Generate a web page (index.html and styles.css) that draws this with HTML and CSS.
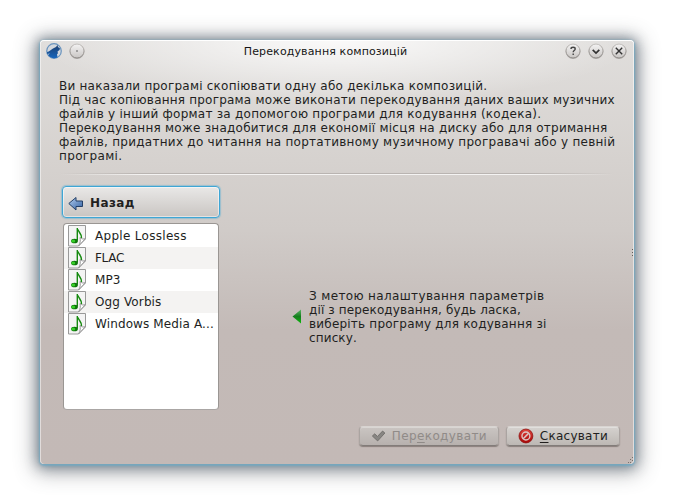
FILE: index.html
```html
<!DOCTYPE html>
<html lang="uk">
<head>
<meta charset="utf-8">
<title>Перекодування композицій</title>
<link rel="stylesheet" href="styles.css">
</head>
<body>
<svg class="defs" width="0" height="0">
  <defs>
    <linearGradient id="btn" x1="0" y1="0" x2="0" y2="1"><stop offset="0" stop-color="#f4f3f3"/><stop offset="1" stop-color="#c9c6c4"/></linearGradient>
    <linearGradient id="rim" x1="0" y1="0" x2="0" y2="1"><stop offset="0" stop-color="#c4c1be"/><stop offset="1" stop-color="#8b8784"/></linearGradient>
    <linearGradient id="blue" x1="0" y1="0" x2="1" y2="1"><stop offset="0" stop-color="#b5d0f2"/><stop offset="1" stop-color="#315fa0"/></linearGradient>
    <linearGradient id="wolf" x1="0" y1="0" x2="0" y2="1"><stop offset="0" stop-color="#1d3f70"/><stop offset="1" stop-color="#1766bd"/></linearGradient>
    <linearGradient id="green" x1="0" y1="0" x2="0" y2="1"><stop offset="0" stop-color="#59b566"/><stop offset=".5" stop-color="#167d1e"/><stop offset="1" stop-color="#08bb08"/></linearGradient>
    <linearGradient id="red" x1="0" y1="0" x2="0" y2="1"><stop offset="0" stop-color="#e0473f"/><stop offset="1" stop-color="#a80606"/></linearGradient>
    <symbol id="round" viewBox="0 0 16 16"><circle cx="8" cy="8.500" r="7.500" fill="#9b9794" opacity=".6"/><circle cx="8" cy="8" r="7" fill="url(#btn)" stroke="url(#rim)"/></symbol>
    <symbol id="note" viewBox="0 0 20 22">
      <path d="M1.500.5h17v13.500l-7 7h-10z" fill="#f4f4f4" stroke="#999"/>
      <path d="M18.500 13.500c-2 1-4 .5-5.500-1 .5 3 .5 5.500-1.500 8.500z" fill="#fff" stroke="#999"/>
      <path d="M10.300 15.500V3c.7 4 4.600 5.500 4.200 10" fill="none" stroke="#168a10" stroke-width="1.400"/>
      <ellipse cx="7.500" cy="16" rx="3.400" ry="2.300" fill="#0d730a"/><ellipse cx="6.300" cy="16" rx="2" ry="1.500" fill="#36cf28"/>
    </symbol>
  </defs>
</svg>
<main class="window">
  <header class="titlebar">
    <svg class="tb-icon" viewBox="0 0 16 16"><circle cx="8" cy="8" r="7.300" fill="#d3d8de" stroke="#6a94be" stroke-width="1.200"/><path d="M1 9c2.500-.5 4-2.500 6-3.500l3-1.500 1.500-2 .5 2 2 1.500-.5 1.500-2 1.500.5 2-1 .5.5 3.500C8 16 4 15 2 12l2-1.500L1.200 11z" fill="url(#wolf)"/></svg>
    <svg class="tb-icon sticky" viewBox="0 0 16 16"><use href="#round"/><circle cx="8" cy="8" r=".7" fill="#333"/></svg>
    <h1>Перекодування композицій</h1>
    <svg class="tb-icon" viewBox="0 0 16 16"><use href="#round"/><path d="M6 6c0-2.300 4.200-2.300 4.200 0 0 1.500-2 1.500-2 3.200M8.200 10.400v1.500" fill="none" stroke="#444" stroke-width="1.400"/></svg>
    <svg class="tb-icon" viewBox="0 0 16 16"><use href="#round"/><path d="M4.700 6.800L8 10l3.300-3.200" fill="none" stroke="#333" stroke-width="1.700"/></svg>
    <svg class="tb-icon" viewBox="0 0 16 16"><use href="#round"/><path d="M4.800 4.800l6.400 6.400M11.200 4.800l-6.400 6.400" stroke="#333" stroke-width="1.400"/></svg>
  </header>
  <p class="intro"><span class="first">Ви наказали програмі скопіювати одну або декілька композицій.</span><br><span class="snug">Під час копіювання програма може виконати перекодування даних ваших музичних</span><br>файлів у інший формат за допомогою програми для кодування (кодека).<br>Перекодування може знадобитися для економії місця на диску або для отримання<br><span class="long">файлів, придатних до читання на портативному музичному програвачі або у певній</span><br><span class="last">програмі.</span></p>
  <div class="rule"></div>
  <section class="body">
    <div class="side">
      <button class="back"><svg width="16" height="16" viewBox="0 0 16 16"><path d="M.8 8.500l7.200-6v3.500h6.500v5.500H8V15z" fill="url(#blue)" stroke="#233f66" stroke-linejoin="round"/></svg>Назад</button>
      <ul class="list">
        <li><svg><use href="#note"/></svg><span class="wide">Apple Lossless</span></li>
        <li><svg><use href="#note"/></svg><span class="flac">FLAC</span></li>
        <li><svg><use href="#note"/></svg><span>MP3</span></li>
        <li><svg><use href="#note"/></svg><span>Ogg Vorbis</span></li>
        <li><svg><use href="#note"/></svg><span>Windows Media A...</span></li>
      </ul>
    </div>
    <div class="hint">
      <svg width="10" height="16" viewBox="0 0 10 16"><path d="M.5 7.500L9 .5v14z" fill="url(#green)"/></svg>
      <p><span class="wide">З метою налаштування параметрів</span><br>дії з перекодування, будь ласка,<br><span class="snug">виберіть програму для кодування зі</span><br>списку.</p>
    </div>
  </section>
  <footer class="actions">
    <button class="action ok" disabled><svg width="16" height="16" viewBox="0 0 16 16"><path d="M1.500 8l2.500-2.300 3 2.800 5.500-5.800L15 4.800 7.200 13.300z" fill="#888683" stroke="#706e6b" stroke-linejoin="round"/></svg><span>Пер<u>е</u>кодувати</span></button>
    <button class="action cancel"><svg width="16" height="16" viewBox="0 0 16 16"><circle cx="8" cy="8" r="7" fill="url(#red)" stroke="#8d1010" stroke-width=".8"/><circle cx="8" cy="8" r="4" fill="none" stroke="#dcc9c6" stroke-width="1.400"/><path d="M5.200 10.800l5.600-5.600" stroke="#dcc9c6" stroke-width="1.600"/></svg><span><u>С</u>касувати</span></button>
  </footer>
  <i class="splitter"></i>
  <svg class="grip" width="7" height="7" viewBox="0 0 7 7"><path d="M5 0h1v1H5zM3 2h1v1H3zM5 3h1v1H5zM1 5h1v1H1zM3 5h1v1H3z" fill="#77716d"/></svg>
</main>
</body>
</html>
```
FILE: styles.css
```css
* { box-sizing: border-box; }
body {
  margin: 0;
  padding: 40px;
  width: 674px;
  height: 504px;
  overflow: hidden;
  background: #fff;
  color: #221f1e;
  font: 12px/14px "DejaVu Sans", sans-serif;
}
.defs { position: absolute; }
p, h1, ul { margin: 0; padding: 0; }
.window {
  position: relative;
  display: flex;
  flex-direction: column;
  width: 594px;
  height: 424px;
  border-radius: 4px;
  background:
    radial-gradient(ellipse 300px 64px at 50% 0, rgba(255,255,255,.85), rgba(255,255,255,0)),
    linear-gradient(#e0dedc, #d6d2cf 120px, #d0cbc8 190px, #c3bab7 290px, #c3b9b6);
  box-shadow:
    inset 0 1px #fff, inset -1px 0 rgba(255,255,255,.5), inset 1px 0 rgba(255,255,255,.5),
    0 1px 2px 1px rgba(110,170,198,.8), 0 1px 12px 2px rgba(60,80,100,.55), 0 3px 20px 6px rgba(80,85,88,.45);
}
.titlebar {
  display: flex;
  align-items: center;
  height: 22px;
  padding: 0 7px 0 6px;
  gap: 7px;
}
.tb-icon { width: 16px; height: 16px; flex: none; }
h1 {
  flex: 1;
  padding: 1px 0 0 1px;
  font-size: 11px;
  line-height: 14px;
  font-weight: 400;
  letter-spacing: .13px;
  text-align: center;
  white-space: nowrap;
  color: #151515;
}
.intro {
  height: 94px;
  margin: 17px 0 0 19px;
  letter-spacing: .25px;
  white-space: nowrap;
}
.intro .first { letter-spacing: .23px; }
.intro .snug { letter-spacing: .205px; }
.intro .long { letter-spacing: .265px; }
.intro .last { letter-spacing: .35px; }
.rule {
  height: 2px;
  margin: 0 20px;
  background:
    linear-gradient(90deg, transparent, #b9b4b1 15%, #b9b4b1 85%, transparent) 0 0 / 100% 1px no-repeat,
    linear-gradient(90deg, transparent, #f5f4f3 15%, #f5f4f3 85%, transparent) 0 1px / 100% 1px no-repeat;
}
.body { display: flex; height: 239px; padding: 11px 22px 0; }
.side { width: 158px; }
button { font: inherit; color: inherit; margin: 0; display: flex; align-items: center; }
.back {
  width: 158px;
  height: 32px;
  padding: 1px 5px 0;
  gap: 6px;
  border: 1px solid #3fa6d5;
  border-radius: 4px;
  background: linear-gradient(#e9e8e7, #c9c5c2);
  box-shadow: 0 0 1px 1px rgba(67,169,216,.4), inset 0 0 0 1px rgba(255,255,255,.5);
  font-weight: 700;
  letter-spacing: .4px;
}
.list {
  width: 156px;
  height: 187px;
  margin: 5px 0 0 1px;
  padding: 1px 0;
  border: 1px solid #9a9693;
  border-bottom-color: #aaa6a4;
  border-radius: 4px;
  overflow: hidden;
  background: #fff;
  list-style: none;
  letter-spacing: .12px;
}
.list li { display: flex; align-items: center; height: 22px; padding-left: 3px; gap: 8px; white-space: nowrap; }
.list .wide { letter-spacing: .3px; }
.list .flac { letter-spacing: -.3px; }
.list li:nth-child(even) { background: #f4f3f2; }
.list svg { width: 20px; height: 22px; flex: none; }
.hint { display: flex; align-items: center; height: 80px; margin: 91px 0 0 72px; gap: 7px; white-space: nowrap; letter-spacing: .13px; }
.hint .wide { letter-spacing: .36px; }
.hint .snug { letter-spacing: .21px; }
.actions { display: flex; gap: 7px; justify-content: flex-end; padding: 12px 14px 0 0; }
.action {
  height: 20px;
  padding: 0 11px;
  gap: 6px;
  border: 1px solid #aaa4a1;
  border-top-color: #d8d4d1;
  border-bottom-color: #827c79;
  border-radius: 4px;
  background: linear-gradient(#d5d2cf, #bdb8b4);
  box-shadow: 0 1px 1px rgba(80,70,65,.5), inset 0 1px rgba(255,255,255,.3);
  letter-spacing: .25px;
}
.ok { width: 140px; color: #908b88; background: linear-gradient(#cac5c2, #b7b1ae); letter-spacing: .38px; }
.cancel { width: 114px; }
.action u { text-underline-offset: 2px; }
.splitter {
  position: absolute;
  right: 1px;
  top: 209px;
  width: 1px;
  height: 7px;
  background: repeating-linear-gradient(#635d59 0 1px, transparent 1px 3px);
}
.grip { position: absolute; right: 0; bottom: 0; }
```
